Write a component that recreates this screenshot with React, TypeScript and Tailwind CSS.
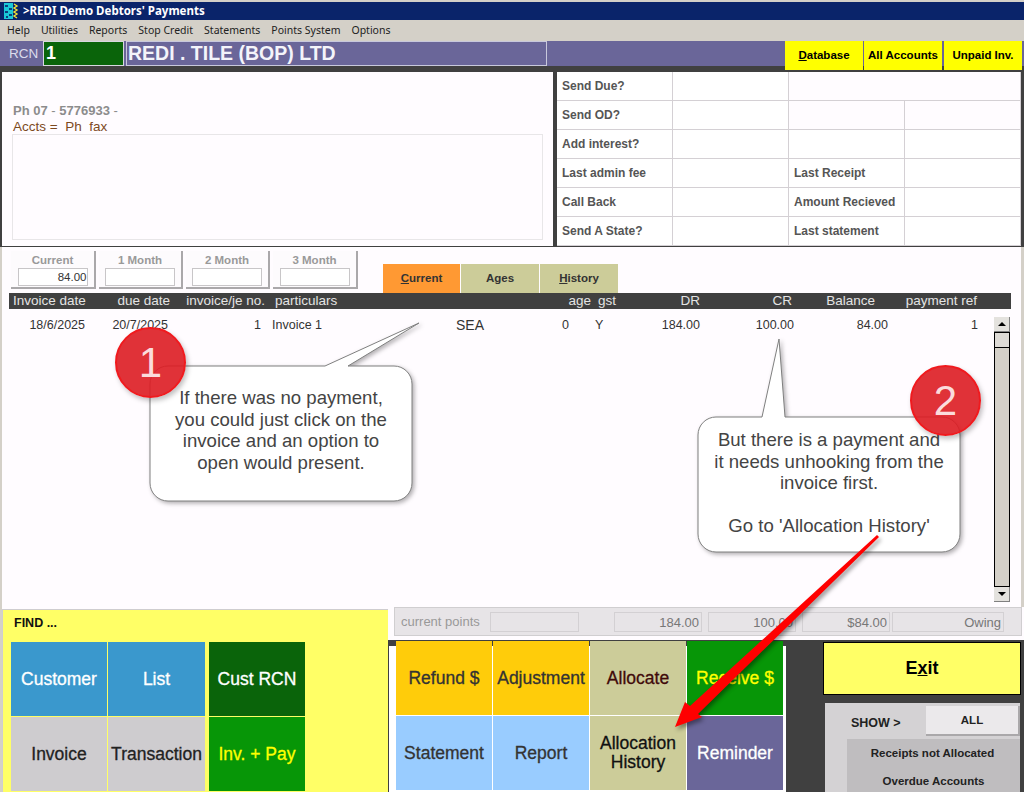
const SANS = 'font-["Liberation_Sans",Arial,sans-serif]';

const MENU = ['Help', 'Utilities', 'Reports', 'Stop Credit', 'Statements', 'Points System', 'Options'];

const INFO_ROWS = [
  ['Send Due?', '', '', ''],
  ['Send OD?', '', '', ''],
  ['Add interest?', '', '', ''],
  ['Last admin fee', '', 'Last Receipt', ''],
  ['Call Back', '', 'Amount Recieved', ''],
  ['Send A State?', '', 'Last statement', ''],
];

const AGING = [
  { label: 'Current', value: '84.00', width: 'w-[85px]' },
  { label: '1 Month', value: '', width: 'w-[84px]' },
  { label: '2 Month', value: '', width: 'w-[84px]' },
  { label: '3 Month', value: '', width: 'w-[85px]' },
];

function TitleIcon() {
  return (
    <svg width="16" height="16" viewBox="0 0 16 16" className="mr-[3px] shrink-0">
      <rect width="16" height="16" fill="#0a246a" />
      <rect x="0" y="0" width="9" height="16" fill="#19c8d8" />
      <path d="M1 2h3v2H1zM5 5h3v2H5zM1 8h3v2H1zM5 11h3v2H5zM2 13h2v2H2z" fill="#0b3f80" />
      <path d="M10 1l3 2-3 2 3 2-3 2 3 2-3 2 3 2" stroke="#f4e23a" strokeWidth="1.4" fill="none" />
    </svg>
  );
}

function ColorButton({ label, className }: { label: string; className: string }) {
  return (
    <div className={`flex items-center justify-center text-center text-[17.5px] leading-[19px] [-webkit-text-stroke:0.3px_currentColor] ${className}`}>
      {label}
    </div>
  );
}

function StatusBox({ value, className }: { value: string; className: string }) {
  return (
    <div className={`h-[20px] border border-[#d3d0d3] pr-[2px] text-right text-[13px] leading-[19px] text-[#777] ${className}`}>
      {value}
    </div>
  );
}

function Callout({ path, className }: { path: string; className: string }) {
  return (
    <div className={`absolute ${className}`}>
      <svg width="290" height="240" viewBox="0 0 290 240" className="absolute left-0 top-0 overflow-visible drop-shadow-[2px_2px_2px_rgba(0,0,0,0.3)]">
        <path d={path} fill="#ffffff" stroke="#7f7f7f" strokeWidth="1" />
      </svg>
    </div>
  );
}

export default function App() {
  return (
    <div className={`relative flex h-[792px] w-[1024px] flex-col overflow-hidden bg-[#d4d0c8] pt-[2px] ${SANS}`}>
      {/* Title bar */}
      <div className="flex h-[18px] shrink-0 items-center bg-[#0a246a] pl-[4px] font-['Noto_Sans',sans-serif] text-[11.5px] font-bold text-white">
        <TitleIcon />
        &gt;REDI Demo Debtors' Payments
      </div>

      {/* Menu */}
      <div className="mt-px flex h-[19px] shrink-0 items-center gap-[11px] pl-[7px] font-['Noto_Sans',sans-serif] text-[10.5px] text-[#222]">
        {MENU.map((item) => (
          <span key={item}>{item}</span>
        ))}
      </div>

      {/* Customer bar */}
      <div className="relative mt-px flex h-[25px] shrink-0 items-stretch bg-[#6a6699] pl-[2px]">
        <span className="w-[41px] pl-[7px] text-[13.5px] leading-[25px] text-[#dcdcec]">RCN</span>
        <div className="w-[81px] border border-[#d8d8e0] bg-[#0a640a] pl-[2px] text-[18px] font-bold leading-[23px] text-white">1</div>
        <div className="ml-[2px] w-[421px] border border-[#c8c8dc] pl-px text-[19.5px] font-bold leading-[23px] text-[#f4f4fa]">
          REDI . TILE (BOP) LTD
        </div>
        <div className="absolute left-[785px] top-0 flex h-[29px] gap-px text-[11.5px] font-bold text-black">
          <div className="flex w-[78px] items-center justify-center bg-[#ffff00]">
            <span><span className="underline">D</span>atabase</span>
          </div>
          <div className="flex w-[78px] items-center justify-center bg-[#ffff00]">All Accounts</div>
          <div className="ml-px flex w-[78px] items-center justify-center bg-[#ffff00]">Unpaid Inv.</div>
        </div>
      </div>
      <div className="h-[6px] shrink-0 bg-[#404040]" />

      {/* Contact and info table */}
      <div className="flex h-[174px] shrink-0 bg-[#404040] pl-[2px] pr-[3px]">
        <div className="w-[551px] bg-[#fffcff] pl-[10px] pr-[10px] pt-[31px]">
          <div className="pl-px text-[13px] font-bold leading-[16px] text-[#8c8c8c]">
            Ph 07 <span className="font-normal">-</span> 5776933 <span className="font-normal">-</span>
          </div>
          <div className="pl-px text-[13.5px] leading-[16px] text-[#7d4a1e]">Accts =&nbsp; Ph&nbsp; fax</div>
          <div className="mt-[-1px] h-[106px] border border-[#e8e6e8]" />
        </div>
        <div className="ml-[4px] grid flex-1 grid-cols-4 grid-rows-6 bg-white">
          {INFO_ROWS.flatMap((row, r) =>
            row.map((cell, c) => (
              <div
                key={`${r}-${c}`}
                className={`flex items-center border-b border-r border-[#d4d0d4] pl-[5px] text-[12px] font-bold text-[#555] ${r < 2 && c >= 2 ? 'bg-[#fffcff]' : ''} ${r === 0 && c === 2 ? 'border-r-0' : ''}`}
              >
                {cell}
              </div>
            )),
          )}
        </div>
      </div>
      <div className="h-px shrink-0 bg-[#404040]" />

      {/* Ledger */}
      <div className="relative ml-[2px] mr-[3px] flex h-[360px] shrink-0 flex-col bg-[#fffcff] pl-[7px] pr-[10px]">
        <div className="flex h-[46px] shrink-0 items-end pl-[2px]">
          <div className="flex h-[42px] gap-[3px] self-start pt-[4px]">
            {AGING.map((box) => (
              <div key={box.label} className={`${box.width} h-[38px] border-b-2 border-r-2 border-[#aaa8aa] bg-[#fdfbfd] text-center`}>
                <div className="pt-px text-[11.5px] font-bold leading-[16px] text-[#999]">{box.label}</div>
                <div className="mx-auto h-[18px] w-[70px] border border-[#c8c6c8] bg-white text-right text-[11.5px] leading-[16px] text-[#333]">
                  {box.value}
                </div>
              </div>
            ))}
          </div>
          <div className="ml-[25px] flex h-[29px] gap-px text-[11.5px] font-bold text-[#333]">
            <div className="flex w-[77px] items-center justify-center bg-[#ff9933]">
              <span><span className="underline">C</span>urrent</span>
            </div>
            <div className="flex w-[78px] items-center justify-center bg-[#cccc99]">Ages</div>
            <div className="flex w-[78px] items-center justify-center bg-[#cccc99]">
              <span><span className="underline">H</span>istory</span>
            </div>
          </div>
        </div>

        {/* Table header */}
        <div className="grid h-[16px] shrink-0 grid-cols-[91px_78px_92px_180px_105px_37px_38px_72px_94px_94px_90px_31px] bg-[#404040] text-[13.5px] leading-[16px] text-[#e4e4e4]">
          <span className="pl-[4px]">Invoice date</span>
          <span className="pr-[8px] text-right">due date</span>
          <span className="pr-[5px] text-right">invoice/je no.</span>
          <span className="pl-[5px]">particulars</span>
          <span />
          <span className="pr-px text-right">age</span>
          <span className="pl-[6px]">gst</span>
          <span className="pr-[2px] text-right">DR</span>
          <span className="pr-[4px] text-right">CR</span>
          <span className="pr-[15px] text-right">Balance</span>
          <span className="pr-[3px] text-right">payment ref</span>
          <span />
        </div>

        <div className="flex flex-1 justify-between">
          <div className="mt-[8px] grid h-[16px] w-[971px] grid-cols-[91px_78px_92px_180px_105px_37px_38px_72px_94px_94px_90px] text-[12.5px] leading-[16px] text-[#333]">
            <span className="pr-[15px] text-right">18/6/2025</span>
            <span className="pr-[10px] text-right">20/7/2025</span>
            <span className="pr-[9px] text-right">1</span>
            <span className="pl-[2px]">Invoice 1</span>
            <span className="pl-[6px] text-[14px]">SEA</span>
            <span className="pr-[23px] text-right">0</span>
            <span className="pl-[3px]">Y</span>
            <span className="pr-[2px] text-right">184.00</span>
            <span className="pr-[2px] text-right">100.00</span>
            <span className="pr-[2px] text-right">84.00</span>
            <span className="pr-[2px] text-right">1</span>
          </div>

          {/* Scrollbar */}
          <div className="mr-px mt-[8px] flex h-[285px] w-[16px] flex-col bg-[#d4d0c8]">
            <div className="flex h-[15px] items-center justify-center border-b border-r border-[#808080] bg-[#e4e2de]">
              <div className="h-0 w-0 border-x-[4px] border-b-[4px] border-x-transparent border-b-black" />
            </div>
            <div className="flex flex-1 flex-col border border-black">
              <div className="h-[15px] border-b border-black bg-[#dedbd6]" />
            </div>
            <div className="flex h-[15px] items-center justify-center border-b border-r border-[#808080] bg-[#e4e2de]">
              <div className="h-0 w-0 border-x-[4px] border-t-[4px] border-x-transparent border-t-black" />
            </div>
          </div>
        </div>
      </div>

      {/* Bottom area */}
      <div className="ml-[2px] flex h-[185px] shrink-0 overflow-hidden bg-[#fffcff]">
        <div className="mt-[2px] w-[386px] shrink-0 border-l border-t border-[#cfcdcf] bg-[#ffff66] pl-[8px]">
          <div className="h-[32px] pl-[3px] pt-[5px] text-[12.5px] font-bold leading-[16px] text-[#111]">FIND ...</div>
          <div className="grid w-[294px] grid-cols-[96px_97px_96px] grid-rows-[74px_74px] gap-px">
            <ColorButton label="Customer" className="bg-[#3a98cd] text-white" />
            <ColorButton label="List" className="bg-[#3a98cd] text-white" />
            <ColorButton label="Cust RCN" className="ml-[3px] w-[96px] bg-[#0a640a] text-white" />
            <ColorButton label="Invoice" className="bg-[#cecccf] text-[#222]" />
            <ColorButton label="Transaction" className="bg-[#cecccf] text-[#222]" />
            <ColorButton label="Inv. + Pay" className="ml-[3px] w-[96px] bg-[#079607] text-[#ffff00]" />
          </div>
        </div>

        <div className="flex flex-1 flex-col">
          <div className="h-[33px] shrink-0 pl-[6px] pr-[2px]">
            <div className="flex h-[29px] items-center border border-[#d0ced0] bg-[#e7e4e7] pl-[6px]">
              <span className="w-[89px] text-[13px] text-[#999]">current points</span>
              <div className="h-[20px] w-[89px] border border-[#d3d0d3]" />
              <StatusBox value="184.00" className="ml-[35px] w-[88px]" />
              <StatusBox value="100.00" className="ml-[6px] w-[88px]" />
              <StatusBox value="$84.00" className="ml-[6px] w-[88px]" />
              <StatusBox value="Owing" className="ml-[2px] w-[112px]" />
            </div>
          </div>

          <div className="flex flex-1 bg-[#404040] pr-[3px]">
            <div className="flex w-[398px] flex-col">
              <div className="ml-px mt-[6px] h-full bg-white pl-[7px]">
                <div className="mt-[-5px] grid w-[387px] grid-cols-4 grid-rows-[74px_74px] gap-px">
                  <ColorButton label="Refund $" className="bg-[#ffcc0a] text-[#333]" />
                  <ColorButton label="Adjustment" className="bg-[#ffcc0a] text-[#333]" />
                  <ColorButton label="Allocate" className="bg-[#cccc99] text-[#400a0a]" />
                  <ColorButton label="Receive $" className="bg-[#079607] text-[#ffff00]" />
                  <ColorButton label="Statement" className="bg-[#99ccff] text-[#333]" />
                  <ColorButton label="Report" className="bg-[#99ccff] text-[#333]" />
                  <ColorButton label="Allocation History" className="bg-[#cccc99] px-[4px] text-[#111]" />
                  <ColorButton label="Reminder" className="bg-[#6a6699] text-white" />
                </div>
              </div>
            </div>
            <div className="flex min-h-0 flex-1 flex-col pl-[37px] pt-[2px]">
              <div className="flex h-[53px] shrink-0 items-center justify-center border border-black bg-[#ffff66] text-[18px] font-bold text-black">
                <span>E<span className="underline">x</span>it</span>
              </div>
              <div className="ml-[2px] mr-px mt-[8px] flex-1 bg-[#d4d2d4]">
                <div className="flex h-[36px] items-start">
                  <span className="w-[101px] pl-[26px] pt-[11px] text-[12.5px] font-bold text-[#222]">SHOW &gt;</span>
                  <div className="mt-[3px] flex h-[30px] flex-1 items-center justify-center border-b-2 border-r-2 border-[#aaa8aa] bg-[#ebe9eb] pt-[2px] text-[11.5px] font-bold text-[#222]">ALL</div>
                </div>
                <div className="ml-[22px] h-[60px] bg-[#bfbdbf] text-center text-[11.5px] font-bold text-[#222]">
                  <div className="pr-[2px] pt-[7px] leading-[14px]">Receipts not Allocated</div>
                  <div className="pt-[14px] leading-[14px]">Overdue Accounts</div>
                </div>
              </div>
            </div>
          </div>
        </div>
      </div>

      {/* Callout 1 */}
      <Callout
        className="left-[150px] top-[323px]"
        path="M18 43 H175 L269 0 L198 43 H244 A18 18 0 0 1 262 61 V160 A18 18 0 0 1 244 178 H18 A18 18 0 0 1 0 160 V61 A18 18 0 0 1 18 43 Z"
      />
      <div className="absolute left-[150px] top-[387px] w-[262px] text-center text-[18.6px] leading-[21.5px] text-[#444]">
        If there was no payment,
        <br />
        you could just click on the
        <br />
        invoice and an option to
        <br />
        open would present.
      </div>

      {/* Callout 2 */}
      <Callout
        className="left-[698px] top-[339px]"
        path="M18 78 H64 L81 0 L87 78 H244 A18 18 0 0 1 262 96 V195 A18 18 0 0 1 244 213 H18 A18 18 0 0 1 0 195 V96 A18 18 0 0 1 18 78 Z"
      />
      <div className="absolute left-[698px] top-[429px] w-[262px] text-center text-[18.6px] leading-[21.5px] text-[#444]">
        But there is a payment and
        <br />
        it needs unhooking from the
        <br />
        invoice first.
        <br />
        <br />
        Go to 'Allocation History'
      </div>

      {/* Number badges */}
      <div className="absolute left-[115px] top-[327px] flex h-[71px] w-[71px] items-center justify-center rounded-full border-2 border-[#f01a1e] bg-[#dd1c22]/90 text-[42px] leading-none text-[#fbdcdc] shadow-[2px_3px_5px_rgba(0,0,0,0.25)]">
        1
      </div>
      <div className="absolute left-[910px] top-[365px] flex h-[71px] w-[71px] items-center justify-center rounded-full border-2 border-[#f01a1e] bg-[#dd1c22]/90 text-[42px] leading-none text-[#fbdcdc] shadow-[2px_3px_5px_rgba(0,0,0,0.25)]">
        2
      </div>

      {/* Arrow */}
      <svg width="1024" height="792" viewBox="0 0 1024 792" className="pointer-events-none absolute left-0 top-0 drop-shadow-[2px_3px_2px_rgba(0,0,0,0.4)]">
        <polygon points="877,535 879,537 698,714 702,717 675,727 685,702 690,706" fill="#ff0000" />
      </svg>
    </div>
  );
}
